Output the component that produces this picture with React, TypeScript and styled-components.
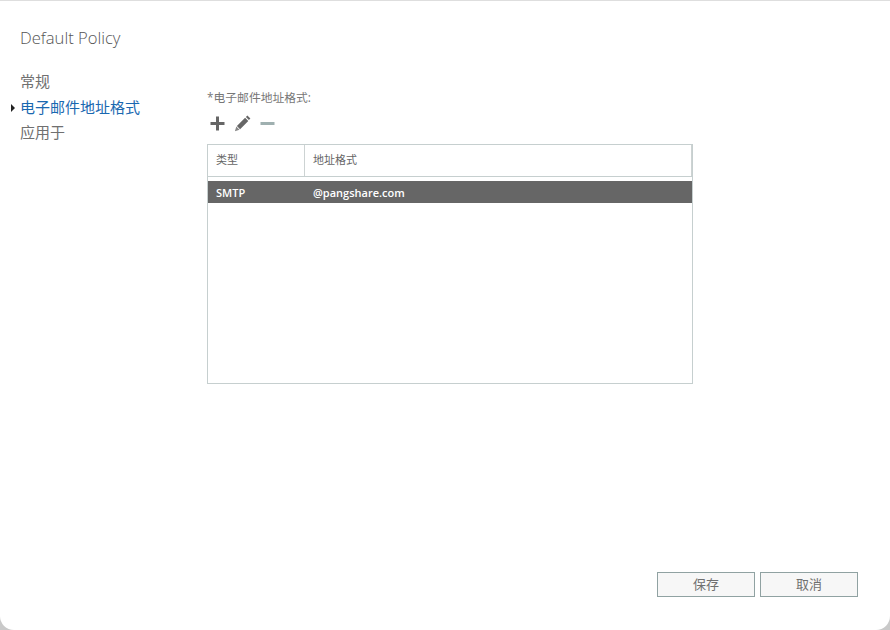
import React, { FC } from 'react'
import styled, { createGlobalStyle } from 'styled-components';

const GlobalStyle = createGlobalStyle`
    html, body {
        margin: 0;
        padding: 0;
        background: #c9c9c9;
    }
`;

const Window = styled.div`
    box-sizing: border-box;
    width: 890px;
    height: 630px;
    display: flex;
    flex-direction: column;
    background: #fff;
    border-top: 1px solid #dedede;
    border-radius: 0 0 14px 14px;
    color: #666;
    font-family: "Open Sans", "Noto Sans CJK SC", sans-serif;
    overflow: hidden;
`;

const Title = styled.h1`
    margin: 24px 0 0 20px;
    height: 26px;
    font-size: 16.6px;
    line-height: 26px;
    font-weight: 300;
    color: #555;
`;

const Body = styled.div`
    flex: 1;
    display: flex;
    min-height: 0;
`;

const Nav = styled.ul`
    width: 207px;
    flex-shrink: 0;
    margin: 18px 0 0;
    padding: 0;
    list-style: none;
`;

const NavItem = styled.li<{ $active?: boolean }>`
    position: relative;
    height: 25.6px;
    padding-left: 20px;
    font-size: 15px;
    line-height: 25px;
    color: ${p => (p.$active ? '#1a68b0' : '#707070')};
`;

const NavMarker = styled.span`
    position: absolute;
    left: 11px;
    top: 9px;
    width: 0;
    height: 0;
    border-left: 4px solid #222;
    border-top: 4px solid transparent;
    border-bottom: 4px solid transparent;
`;

const Content = styled.div`
    flex: 1;
    display: flex;
    flex-direction: column;
    padding-top: 37px;
`;

const FieldLabel = styled.div`
    height: 18px;
    font-size: 11.8px;
    line-height: 18px;
    color: #777;
`;

const Toolbar = styled.div`
    display: flex;
    align-items: center;
    gap: 8px;
    height: 18px;
    margin: 8px 0 12px 2px;
`;

const ToolIcon = styled.svg`
    display: block;
    width: 17px;
    height: 17px;
`;

const Table = styled.div`
    box-sizing: border-box;
    width: 486px;
    height: 240px;
    border: 1px solid #c6cfcf;
`;

const HeaderRow = styled.div`
    display: flex;
    height: 31px;
    border-bottom: 1px solid #c6cfcf;
    margin-bottom: 4px;
`;

const HeaderCell = styled.div<{ $width: number }>`
    box-sizing: border-box;
    width: ${p => p.$width}px;
    padding-left: 8px;
    font-size: 11px;
    line-height: 30px;
    color: #666;
    border-right: 1px solid #cdd3d3;
`;

const SelectedRow = styled.div`
    display: flex;
    height: 22px;
    background: #666;
    color: #fff;
    font-size: 11px;
    font-weight: 600;
    line-height: 23px;
`;

const Cell = styled.div<{ $width?: number }>`
    box-sizing: border-box;
    width: ${p => (p.$width ? `${p.$width}px` : 'auto')};
    padding-left: 8px;
`;

const Footer = styled.div`
    display: flex;
    justify-content: flex-end;
    gap: 5px;
    padding: 0 32px 33px 0;
`;

const Button = styled.button`
    box-sizing: border-box;
    width: 98px;
    height: 25px;
    padding: 0;
    background: #f7f7f7;
    border: 1px solid #90a2a2;
    color: #707070;
    font-family: inherit;
    font-size: 13px;
    line-height: 23px;
`;

const PlusIcon: FC = () => (
    <ToolIcon viewBox="0 0 17 17">
        <path d="M7 1.5h3v5.5h5.5v3H10v5.5H7V10H1.5V7H7z" fill="#666" />
    </ToolIcon>
);

const PencilIcon: FC = () => (
    <ToolIcon viewBox="0 0 17 17">
        <path d="M13.4.6l3 3-1.5 1.5-3-3zM11.1 2.8l3.2 3.2-8.2 8.2-3.2-3.2z" fill="#666" />
        <path d="M2.3 11.6l3.2 3.2-4.6 1.5z" fill="#888" />
    </ToolIcon>
);

const MinusIcon: FC = () => (
    <ToolIcon viewBox="0 0 17 17">
        <rect x="1.5" y="7" width="14" height="3" fill="#9fb0b0" />
    </ToolIcon>
);

const App: FC = () => {
    return (
        <Window>
            <GlobalStyle />
            <Title>Default Policy</Title>
            <Body>
                <Nav>
                    <NavItem>常规</NavItem>
                    <NavItem $active>
                        <NavMarker />
                        电子邮件地址格式
                    </NavItem>
                    <NavItem>应用于</NavItem>
                </Nav>
                <Content>
                    <FieldLabel>*电子邮件地址格式:</FieldLabel>
                    <Toolbar>
                        <PlusIcon />
                        <PencilIcon />
                        <MinusIcon />
                    </Toolbar>
                    <Table>
                        <HeaderRow>
                            <HeaderCell $width={97}>类型</HeaderCell>
                            <HeaderCell $width={387}>地址格式</HeaderCell>
                        </HeaderRow>
                        <SelectedRow>
                            <Cell $width={97}>SMTP</Cell>
                            <Cell>@pangshare.com</Cell>
                        </SelectedRow>
                    </Table>
                </Content>
            </Body>
            <Footer>
                <Button>保存</Button>
                <Button>取消</Button>
            </Footer>
        </Window>
    )
}

export default App;
